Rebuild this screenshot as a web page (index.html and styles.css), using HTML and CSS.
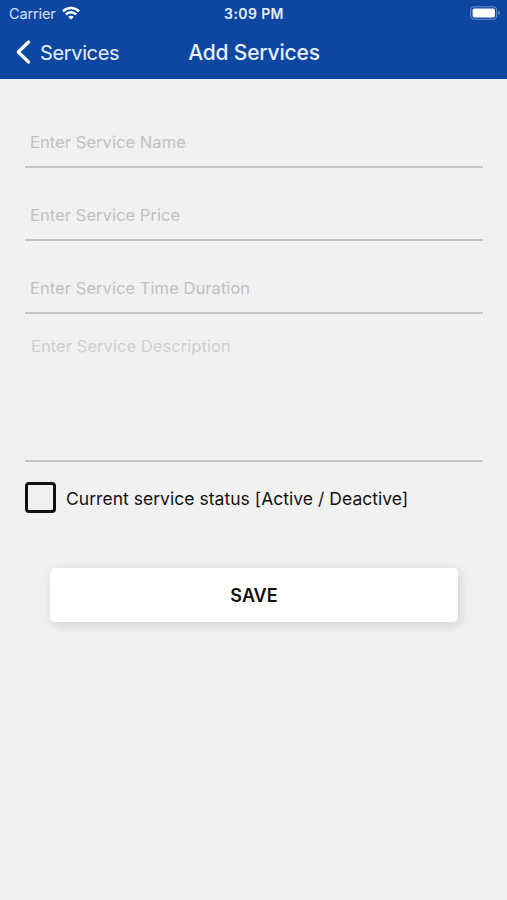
FILE: index.html
```
<!DOCTYPE html>
<html lang="en">
<head>
<meta charset="utf-8">
<title>Add Services</title>
<link rel="stylesheet" href="styles.css">
</head>
<body>
<header class="header">
  <div class="status">
    <div class="network">
      <span class="carrier">Carrier</span>
      <svg class="wifi" width="18" height="14" viewBox="0 0 18 14" fill="none" stroke="#fff" stroke-width="2.5"><path d="M.9 5.3C5.6.8 12.4.8 17.1 5.3"/><path d="M3.8 8.4c3-2.9 7.4-2.9 10.4 0"/><path d="M9 13.6 6.2 10.9c1.6-1.5 4-1.5 5.6 0Z" fill="#fff" stroke="none"/></svg>
    </div>
    <span class="time">3:09 PM</span>
    <svg class="battery" width="31" height="14" viewBox="0 0 31 14"><rect x=".7" y=".7" width="26" height="12.6" rx="3.6" fill="none" stroke="#6d90cb" stroke-width="1.1"/><rect x="2.6" y="2.5" width="22.4" height="9" rx="1.8" fill="#fff"/><path d="M28.3 4.8c2.2.8 2.2 3.6 0 4.4Z" fill="#6d90cb"/></svg>
  </div>
  <nav class="nav">
    <a class="back"><svg width="16" height="26" viewBox="0 0 16 26" fill="none" stroke="#fff" stroke-width="3.2" stroke-linecap="round" stroke-linejoin="round"><path d="M13.6 3 3.2 13 13.6 23"/></svg><span class="back-label">Services</span></a>
    <h1 class="title">Add Services</h1>
  </nav>
</header>
<main class="form">
  <div class="field"><span class="name">Enter Service Name</span></div>
  <div class="field"><span class="price">Enter Service Price</span></div>
  <div class="field"><span class="duration">Enter Service Time Duration</span></div>
  <div class="field area"><span class="description">Enter Service Description</span></div>
  <label class="check"><span class="box"></span><span class="check-label">Current service status [Active / Deactive]</span></label>
  <button class="save"><span>SAVE</span></button>
</main>
</body>
</html>
```
FILE: styles.css
```
* { box-sizing: border-box; }
body { margin: 0; min-height: 900px; background: #f1f1f1; font-family: Inter, "Liberation Sans", sans-serif; color: #111; }
.header { height: 79px; background: #0d47a1; color: #fff; }
.status { height: 27px; display: grid; grid-template-columns: 1fr auto 1fr; align-items: center; padding: 0 6px 0 9px; }
.network { display: flex; align-items: center; gap: 6px; }
.carrier { font-size: 14.5px; letter-spacing: -.12px; color: #d5e1f5; }
.time { font-size: 14px; font-weight: 600; letter-spacing: .4px; margin-right: 2px; color: #e8effb; }
.wifi { margin-top: -2px; }
.battery { justify-self: end; margin-top: -1px; }
.nav { height: 50px; display: grid; grid-template-columns: 1fr auto 1fr; align-items: center; padding: 0 14px 0 15px; }
.back { display: flex; align-items: center; gap: 9px; }
.back-label { font-size: 20px; letter-spacing: -.36px; padding-top: 1px; color: #e8effb; }
.title { margin: 0; font-size: 21px; font-weight: 500; letter-spacing: -.18px; color: #e8effb; white-space: nowrap; }
.form { padding: 38px 24px 0 25px; }
.field { height: 50.5px; border-bottom: 2px solid #c4c4c4; padding: 14px 5px 0; margin-bottom: 22.7px; font-size: 16.5px; letter-spacing: .06px; line-height: 22px; color: #c0c0c0; white-space: nowrap; }
.field.area { height: 139px; margin: -14px 0 20px; padding: 12px 6px 0; color: #cfcfcf; }
.check { display: flex; align-items: center; gap: 10px; height: 31px; }
.box { width: 31px; height: 31px; border: 3px solid #111; border-radius: 4px; }
.check-label { padding-top: 2px; font-size: 17.5px; letter-spacing: .03px; white-space: nowrap; }
.save { display: block; width: 408px; height: 54px; margin: 55px 0 0 25px; padding: 1px 0 0; border: 0; border-radius: 5px; background: #fff; box-shadow: 2px 3px 11px rgba(0,0,0,.14); font-family: inherit; font-size: 18px; font-weight: 600; color: #111; }
```
